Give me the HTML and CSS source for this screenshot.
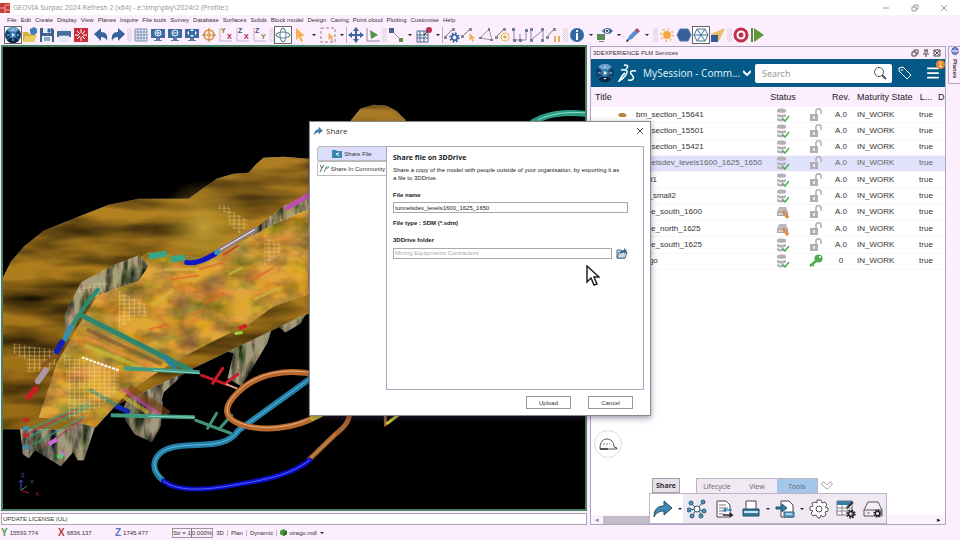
FILE: index.html
```html
<!DOCTYPE html>
<html lang="en">
<head>
    <meta charset="UTF-8">
    <meta name="viewport" content="width=device-width, initial-scale=1.0">
    <title>GEOVIA Surpac 2024 Refresh 2</title>
    <link rel="stylesheet" href="styles.css">
</head>
<body>

    <!-- shared icons -->
    <svg class="sprite" aria-hidden="true">
        <symbol id="i-sphere" viewBox="0 0 16 16"><circle cx="8" cy="8" r="8" fill="#123f6b"/><path d="M8 8 2 2.500a8 8 0 0 1 12 0z" fill="#6fa3cf"/><path d="M8 8 2 13.500a8 8 0 0 0 12 0z" fill="#0a2848"/><path d="M2 3 14 13M14 3 2 13" stroke="#2c6494" stroke-width="1"/><circle cx="8" cy="8" r="3.500" fill="#3878ad"/><path d="M7 6v4l3-2z" fill="#e8f3fb"/><path d="M2 8h2M12 8h2M7 13h2M7 3h2" stroke="#c8deee"/></symbol>
        <symbol id="i-monitor" viewBox="0 0 16 16"><path d="M1 2h14v9H1z" fill="#3b6ba3"/><path d="M6 11h4v2h2v1H4v-1h2z" fill="#5c7fa8"/></symbol>
        <symbol id="i-cursor" viewBox="0 0 16 16"><path d="M4 1v12l3-3 2 5 2-1-2-5h4z" fill="#f0b04f"/></symbol>
        <symbol id="i-gear" viewBox="0 0 16 16"><circle cx="8" cy="8" r="6" fill="none" stroke="currentColor" stroke-width="3" stroke-dasharray="2.400 2.300"/><circle cx="8" cy="8" r="4" fill="none" stroke="currentColor" stroke-width="2.500"/></symbol>
        <symbol id="i-share" viewBox="0 0 20 18"><path d="M1 17C1 9 5 6 11 6V1l8 7-8 7v-4c-5 0-8 2-10 6z" fill="#4288b3" stroke="#234c66"/></symbol>
        <symbol id="i-db" viewBox="0 0 14 14"><path d="M1 2c0-2 9-2 9 0v2c0 1-9 1-9 0zM1 6c2 1 7 1 9 0v2c-1 2-8 2-9 0zM1 10c2 1 5 1 7 1v2c-3 1-7 0-7-1z" fill="#b5afb8"/><path d="M6 10l3 3 4-5" fill="none" stroke="#4cab50" stroke-width="1.500"/></symbol>
        <symbol id="i-drive" viewBox="0 0 14 14"><path d="M3 2h7l2 5H1z" fill="#bdb7c0"/><path d="M1 7h11v4H1z" fill="#aaa4ae"/><path d="M2 9h5" stroke="#fff"/><path d="M8 11V6M6 8l2-2 1 2M11 7v6M9 11l2 2 2-2" fill="none" stroke="#e0883c" stroke-width="1.300"/></symbol>
        <symbol id="i-lock" viewBox="0 0 14 14"><path d="M1 6h8v7H1z" fill="#b3adb6"/><path d="M7 6V3c0-3 5-3 5 0v3" fill="none" stroke="#b3adb6" stroke-width="1.500"/><path d="M5 8v3" stroke="#fff" stroke-width="1.500"/></symbol>
        <symbol id="i-key" viewBox="0 0 14 14"><path d="M7 7 1 12" stroke="#4cab50" stroke-width="2.500"/><path d="M3 10l2 2" stroke="#4cab50" stroke-width="1.500"/><circle cx="9.500" cy="4.500" r="4" fill="#4cab50"/><circle cx="11" cy="3" r="1" fill="#fff"/></symbol>
        <symbol id="i-axes" viewBox="0 0 16 16"><path d="M2 1v13h12" fill="none" stroke="#bdb2cc"/></symbol>
    </svg>

    <header class="titlebar">
        <svg class="app-icon" viewBox="0 0 10 10"><path d="M0 0h10v10H0z" fill="#c83c3a"/><path d="M0 5h5V2h5M5 5v5M5 7h5" stroke="#f0a09a" fill="none"/></svg>
        <h1>GEOVIA Surpac 2024 Refresh 2 (x64) - e:\tmp\pby\2024r2 (Profile:)</h1>
        <div class="window-buttons">
            <button aria-label="Minimise"><svg viewBox="0 0 8 8"><path d="M1 4h6"/></svg></button>
            <button aria-label="Restore"><svg viewBox="0 0 8 8"><path d="M1 3h4v4H1zM3 3V1h4v4H5"/></svg></button>
            <button aria-label="Close window"><svg viewBox="0 0 8 8"><path d="M1 1l6 6M7 1 1 7"/></svg></button>
        </div>
    </header>

    <nav class="menubar">
        <a href="#">File</a><a href="#">Edit</a><a href="#">Create</a><a href="#">Display</a><a href="#">View</a><a href="#">Planes</a><a href="#">Inquire</a><a href="#">File tools</a><a href="#">Survey</a><a href="#">Database</a><a href="#">Surfaces</a><a href="#">Solids</a><a href="#">Block model</a><a href="#">Design</a><a href="#">Caving</a><a href="#">Point cloud</a><a href="#">Plotting</a><a href="#">Customise</a><a href="#">Help</a>
    </nav>

    <div class="toolbar">
        <button class="tool boxed" aria-label="Compass"><svg><use href="#i-sphere"/></svg></button>
        <button class="tool" aria-label="Open"><svg viewBox="0 0 16 16"><path d="M1 5h5l1 2h7l-2 8H1z" fill="#d2b13c"/><path d="M3 9h12l-3 6H1z" fill="#e6cf62"/><path d="M8 2l4-2 3 2v4l-4 2-3-2z" fill="#3f7fc0"/></svg></button>
        <button class="tool" aria-label="Save"><svg viewBox="0 0 16 16"><path d="M1 1h12l2 2v12H1z" fill="#3a6290"/><path d="M4 1h8v5H4zM3 9h10v6H3z" fill="#e9eef5"/><path d="M9 2h2v3H9zM5 11h6M5 13h6" stroke="#3a6290" fill="#3a6290"/></svg></button>
        <button class="tool" aria-label="Print"><svg viewBox="0 0 16 16"><path d="M1 4h14v6H1z" fill="#456f9e"/><path d="M4 1h8v3H4zM3 8h10v7H3z" fill="#e4e8f2"/><path d="M3 8h10" stroke="#29527d"/></svg></button>
        <button class="tool" aria-label="Stop"><svg viewBox="0 0 16 16"><path d="M1 1h14v14H1z" fill="#c8303c"/><path d="M8 2v4M8 10v4M2 8h4M10 8h4M4 4l3 3M12 4 9 7M4 12l3-3M12 12 9 9" stroke="#fff"/></svg></button>
        <button class="tool undo" aria-label="Undo"><svg viewBox="0 0 16 16"><path d="M1 7l7-6v4c5 0 7 3 6 9-1-3-3-4-6-4v4z" fill="#35649b"/></svg></button>
        <button class="tool" aria-label="Redo"><svg viewBox="0 0 16 16"><path d="M15 7 8 1v4C3 5 1 8 2 14c1-3 3-4 6-4v4z" fill="#35649b"/></svg></button>
        <span class="grip"></span>
        <button class="tool" aria-label="Grid"><svg viewBox="0 0 16 16"><path d="M2 2h12v12H2zM5 2v12M8 2v12M11 2v12M2 5h12M2 8h12M2 11h12" fill="#f4f5fc" stroke="#7b8fb9"/></svg></button>
        <button class="tool" aria-label="Zoom in"><svg viewBox="0 0 16 16"><use href="#i-monitor"/><circle cx="8" cy="6" r="3" fill="none" stroke="#fff"/><path d="M6 6h4M8 4v4" stroke="#fff"/></svg></button>
        <button class="tool" aria-label="Zoom out"><svg viewBox="0 0 16 16"><use href="#i-monitor"/><circle cx="8" cy="6" r="3" fill="none" stroke="#fff"/><path d="M6 6h4" stroke="#fff"/></svg></button>
        <button class="tool" aria-label="Zoom all"><svg viewBox="0 0 16 16"><use href="#i-monitor"/><path d="M8 2l2 2H6zM8 10l2-2H6zM3 6l2-2v4zM13 6l-2-2v4z" fill="#fff"/></svg></button>
        <button class="tool" aria-label="Centre"><svg viewBox="0 0 16 16"><circle cx="8" cy="8" r="5" fill="none" stroke="#d88e38" stroke-width="1.500"/><path d="M8 1v5M8 10v5M1 8h5M10 8h5" stroke="#c07a2c"/><circle cx="8" cy="8" r="2" fill="#e6a04c"/></svg></button>
        <button class="tool" aria-label="YX view"><svg viewBox="0 0 16 16"><use href="#i-axes"/><text x="3" y="6" fill="#6d8d36">Y</text><text x="9" y="12" fill="#a02838">X</text></svg></button>
        <button class="tool" aria-label="ZX view"><svg viewBox="0 0 16 16"><use href="#i-axes"/><text x="3" y="6" fill="#35568d">Z</text><text x="9" y="12" fill="#a02838">X</text></svg></button>
        <button class="tool" aria-label="ZY view"><svg viewBox="0 0 16 16"><use href="#i-axes"/><text x="3" y="6" fill="#35568d">Z</text><text x="9" y="12" fill="#6d8d36">Y</text></svg></button>
        <span class="grip"></span>
        <button class="tool boxed" aria-label="Orbit"><svg viewBox="0 0 16 16" fill="none" stroke="#53867a"><ellipse cx="8" cy="8" rx="7" ry="3"/><ellipse cx="8" cy="8" rx="3" ry="7" stroke="#5a7ca8"/><path d="M6 3l2-2 2 2M6 13l2 2 2-2M3 6 1 8l2 2M13 6l2 2-2 2"/></svg></button>
        <button class="tool" aria-label="Select"><svg><use href="#i-cursor"/></svg></button>
        <button class="caret" aria-label="Select options"></button>
        <button class="tool" aria-label="Select area"><svg viewBox="0 0 16 16"><path d="M1 1h14v14H1z" fill="none" stroke="#96788f" stroke-dasharray="3 2"/><use href="#i-cursor" x="6" y="5" width="10" height="10"/></svg></button>
        <button class="caret line" aria-label="Area options"></button>
        <button class="tool" aria-label="Move"><svg viewBox="0 0 16 16"><path d="M8 2v12M2 8h12" stroke="#3a689d" stroke-width="2"/><path d="M8 0l3 4H5zM8 16l3-4H5zM0 8l4-3v6zM16 8l-4-3v6z" fill="#3a689d"/></svg></button>
        <button class="tool" aria-label="Plane"><svg viewBox="0 0 16 16"><path d="M2 1v13h13" fill="none" stroke="#8a86a5"/><path d="M5 3l8 5-7 4z" fill="#4f9542"/></svg></button>
        <span class="grip"></span>
        <button class="tool" aria-label="Segment"><svg viewBox="0 0 16 16"><path d="M4 4l9 9" stroke="#8e8b99"/><path d="M1 1h5v5H1z" fill="#456584"/><path d="M11 11h4v4h-4z" fill="#5d8d3e"/></svg></button>
        <button class="caret" aria-label="Segment options"></button>
        <button class="tool" aria-label="Grid point"><svg viewBox="0 0 16 16"><path d="M1 4h11v11H1zM4 4v11M8 4v11M1 8h11M1 11h11" fill="none" stroke="#48698f"/><circle cx="13" cy="3" r="3" fill="#b93550"/><path d="M12 4 8 8" stroke="#222"/></svg></button>
        <button class="caret line" aria-label="Grid options"></button>
        <button class="tool" aria-label="String settings"><svg viewBox="0 0 16 16"><path d="M1 10 9 2" stroke="#76866f"/><path d="M0 9h3v3H0zM8 1h3v3H8z" fill="#8c86a0"/><use href="#i-gear" x="5" y="5" width="11" height="11" color="#34679b"/></svg></button>
        <button class="tool" aria-label="String select"><svg viewBox="0 0 16 16"><path d="M2 9 9 2" stroke="#76866f"/><path d="M0 8h3v3H0zM8 1h3v3H8z" fill="#8c86a0"/><use href="#i-cursor" x="6" y="5" width="10" height="11"/></svg></button>
        <button class="tool" aria-label="Polygon"><svg viewBox="0 0 16 16"><path d="M2 11 11 2l3 11z" fill="none" stroke="#9a98a6"/><path d="M1 10h3v2H1zM10 1h2v3h-2zM12 12h3v2h-3z" fill="#77809a"/></svg></button>
        <button class="tool" aria-label="Add point"><svg viewBox="0 0 16 16"><path d="M1 10 9 2" stroke="#76866f"/><path d="M0 9h3v3H0zM8 1h3v3H8z" fill="#8c86a0"/><circle cx="10" cy="10" r="4" fill="#fff4dd" stroke="#e8b75d"/><path d="M8 10h4M10 8v4" stroke="#dc9d35"/></svg></button>
        <button class="tool" aria-label="Join"><svg viewBox="0 0 16 16"><path d="M2 2v11h6V7M8 13h6V3" fill="none" stroke="#8a86a5"/><path d="M0 1h3v3H0zM1 12h3v3H1zM7 12h3v3H7zM13 2h3v3h-3z" fill="#6f7895"/></svg></button>
        <button class="tool" aria-label="Break"><svg viewBox="0 0 16 16"><path d="M2 14V3M2 13 14 3v11" fill="none" stroke="#8a86a5"/><path d="M1 1h3v3H1zM1 12h3v3H1zM12 1h3v3h-3zM12 12h3v3h-3z" fill="#77809a"/></svg></button>
        <button class="tool" aria-label="Renumber"><svg viewBox="0 0 16 16"><path d="M1 10 8 2" stroke="#76866f"/><path d="M0 9h3v3H0zM7 1h3v3H7z" fill="#8c86a0"/><path d="M9 9v6M13 9v6M8 10h1M12 10h1" stroke="#e9ae57" stroke-width="2"/></svg></button>
        <span class="grip"></span>
        <button class="tool" aria-label="Info"><svg viewBox="0 0 16 16"><circle cx="8" cy="8" r="7" fill="#3268a4"/><path d="M8 3v2M8 6v7" stroke="#fff" stroke-width="2"/></svg></button>
        <button class="caret" aria-label="Info options"></button>
        <button class="tool" aria-label="Show"><svg viewBox="0 0 16 16"><path d="M0 7h8v6H0zM2 14h5v1H2z" fill="#5c8c52"/><path d="M5 4c3-4 8-4 11 0-3 4-8 4-11 0z" fill="#3f6f99"/><circle cx="10" cy="4" r="2" fill="#fff"/><circle cx="10" cy="4" r="1" fill="#222"/></svg></button>
        <button class="caret" aria-label="Show options"></button>
        <button class="tool" aria-label="Edit"><svg viewBox="0 0 16 16"><path d="M2 14 4 9l7-7 3 3-7 7z" fill="#5c8fd0"/><path d="M10 3l2-2 3 3-2 2z" fill="#b84d62"/><path d="M1 15l1-3 2 2z" fill="#222"/></svg></button>
        <button class="caret" aria-label="Edit options"></button>
        <span class="grip"></span>
        <button class="tool" aria-label="Light"><svg viewBox="0 0 16 16"><circle cx="8" cy="8" r="4" fill="#f2a93a"/><circle cx="8" cy="8" r="6" fill="none" stroke="#f0b45a" stroke-width="2" stroke-dasharray="1.500 3.200"/></svg></button>
        <button class="tool" aria-label="Solid"><svg viewBox="0 0 16 16"><path d="M4 2h8l3 6-3 6H4L1 8z" fill="#345f98" stroke="#4e79ad"/></svg></button>
        <button class="tool boxed" aria-label="Wireframe"><svg viewBox="0 0 16 16"><path d="M4 2h8l3 6-3 6H4L1 8zM4 2l8 12M12 2 4 14M1 8h14" fill="#f4f8ff" stroke="#4b7095"/></svg></button>
        <button class="tool" aria-label="Spotlight"><svg viewBox="0 0 16 16"><path d="M1 7 15 1 9 14z" fill="#edbb62"/><path d="M1 8h7v7H1z" fill="#2f5c93"/></svg></button>
        <span class="grip"></span>
        <button class="tool" aria-label="Record"><svg viewBox="0 0 16 16"><circle cx="8" cy="8" r="6" fill="#fff" stroke="#c02f4e" stroke-width="3"/><circle cx="8" cy="8" r="2.500" fill="#c02f4e"/></svg></button>
        <button class="tool" aria-label="Play"><svg viewBox="0 0 16 16"><path d="M2 1v14" stroke="#568f47" stroke-width="2"/><path d="M4 1l10 7-10 7z" fill="#5e983d"/></svg></button>
    </div>

    <main class="workspace">
        <section class="viewport">
            <svg class="scene" viewBox="4 47 583 463" preserveAspectRatio="xMidYMid slice">
                <defs>
                    <!-- one noise channel spread over r, g and b gives grey shading -->
                    <filter id="folds" x="0" y="0" width="1" height="1" color-interpolation-filters="sRGB">
                        <feTurbulence type="fractalNoise" baseFrequency=".01 .045" numOctaves="3" seed="7"/>
                        <feColorMatrix values="1.600 0 0 0 0  1.600 0 0 0 0  1.600 0 0 0 0  0 0 0 0 1" result="n"/>
                        <feBlend in="SourceGraphic" in2="n" mode="multiply"/>
                        <feComposite in2="SourceGraphic" operator="in"/>
                    </filter>
                    <filter id="rough" x="0" y="0" width="1" height="1" color-interpolation-filters="sRGB">
                        <feTurbulence type="fractalNoise" baseFrequency=".035 .06" numOctaves="4" seed="3"/>
                        <feColorMatrix values=".9 0 0 0 .4  .7 .4 0 0 .3  .4 0 1 0 .1  0 0 0 0 1" result="n"/>
                        <feBlend in="SourceGraphic" in2="n" mode="multiply"/>
                        <feComposite in2="SourceGraphic" operator="in"/>
                    </filter>
                    <filter id="rock" x="0" y="0" width="1" height="1" color-interpolation-filters="sRGB">
                        <feTurbulence type="fractalNoise" baseFrequency=".12 .03" numOctaves="4" seed="11"/>
                        <feColorMatrix values="2.200 0 0 0 -.35  1.900 .3 0 0 -.35  1.800 0 .3 0 -.35  0 0 0 0 1" result="n"/>
                        <feBlend in="SourceGraphic" in2="n" mode="multiply"/>
                        <feComposite in2="SourceGraphic" operator="in"/>
                    </filter>
                    <radialGradient id="glow" cx="205" cy="228" r="48" gradientUnits="userSpaceOnUse"><stop offset="0" stop-color="#bf9c34"/><stop offset="1" stop-color="#b88a20" stop-opacity="0"/></radialGradient>
                    <linearGradient id="hill" x1="0" y1="0" x2="0" y2="1"><stop offset="0" stop-color="#a87a26"/><stop offset=".4" stop-color="#b4821e"/><stop offset="1" stop-color="#966814"/></linearGradient>
                    <pattern id="mesh" width="5" height="4" patternUnits="userSpaceOnUse"><path d="M0 0h5M0 0v4" stroke="#f0dfa0" stroke-width=".8" fill="none"/></pattern>
                </defs>
                <!-- rock below the surface -->
                <g filter="url(#rock)" fill="#a29a80">
                    <path d="M310 285v25l-8 14-15 9-12-10-6 20-26 44-14-8 6-25-25-7-10 14-35 32-10 40-20-6-10-18 10-28 60-50 50-20z"/>
                    <path d="M126 420l10 15 17 8 9-16 2-25-30-10zM20 420l4 35 6 4 6-8 26 16 12-14 5 8h6l14-42 6-40-60-10z"/>
                </g>
                <!-- back hill -->
                <path filter="url(#folds)" fill="url(#hill)" d="M4 278l8-16 13-15 20-16 30-12 35-14 30-6h50l15-11 13-9 17-5 15-1 8-9 7-6 20-1 25 2 30-18 13-21 9-11 13-4 13 1 10 5 9 9v180l-100 15-240 115H4z"/>
                <circle cx="205" cy="228" r="48" fill="url(#glow)"/>
                <!-- front surface -->
                <path filter="url(#rough)" fill="#e0a63c" d="M310 205v90l-10 3-25 9-25 18-12 5-43 22-27 15-38 25-33 36-25-6-14-2-18-2 18-54 20-35 25-40 22-22 25-14 60 6 40-20 35-24z"/>
                <path filter="url(#rock)" fill="#a8a07c" d="M66 315l16-32 34-18 24-9 10 10-10 15-17 6-32 12-15 28-10 12z"/>
                <path filter="url(#rock)" fill="#b0a080" d="M258 228l28-22 24-10v14l-38 16-20 12z"/>
                <!-- coloured veins -->
                <g fill="none" stroke-width="4" opacity=".65">
                    <path d="M88 330l75 35" stroke="#7a5a38"/><path d="M86 338l68 29" stroke="#e8903a"/><path d="M86 346l58 23" stroke="#c8bc38"/><path d="M86 322l90 42" stroke="#9a8a40" stroke-width="7"/>
                    <path d="M125 390l36 25" stroke="#c03ea0"/><path d="M130 388l40 27" stroke="#7c4218" stroke-width="7"/><path d="M110 388l40 26" stroke="#cfae30"/><path d="M90 390l42 24" stroke="#3a8a70"/>
                    <path d="M172 280l28-4M200 270l24-7M205 305l20-12M150 330l20-5M255 280l20-12M195 315l12-5" stroke="#e0602c" stroke-width="2"/>
                    <path d="M165 270l35 0M255 300l28-12M175 290l-20 15M230 275l14-7" stroke="#d0b848" stroke-width="3"/>
                    <path d="M30 430l60-26M30 438l62-32M35 445l50-28" stroke="#399a7c" stroke-width="2"/><path d="M28 435l50-25M44 448l40-28" stroke="#b03860" stroke-width="2"/>
                </g>
                <path d="M117 407l14 6" stroke="#1528b0" stroke-width="5"/>
                <path d="M50 445l8-5M60 458l6-4" stroke="#c86ad8" stroke-width="4"/><path d="M58 457h6" stroke="#50d060" stroke-width="4"/>
                <path d="M24 421h6M24 436h6" stroke="#c02828" stroke-width="4"/><path d="M24 429h6M24 448h6" stroke="#3a8fb0" stroke-width="4"/>
                <path d="M240 329l8-3" stroke="#d02020" stroke-width="4"/><path d="M236 334l8-1" stroke="#a0d040" stroke-width="3"/>
                <!-- block model cells -->
                <g fill="url(#mesh)">
                    <path d="M220 205h9l4 7 16 8v8l-8 6-10-8-2-12-9-4z"/><path d="M266 236l18 10-4 10-14 10z"/><path d="M120 292l28 13v13l-10-2-18 14z"/><path d="M14 344l46 7-6 20-26 2-2-13-12-6z"/><path d="M65 355l55 16v20l-20 18-30 11z"/><path d="M79 290l18-7h12v4l-20 2-8 5z"/>
                </g>
                <path d="M83 358l37 13" stroke="#fff" stroke-width="2" stroke-dasharray="3 1"/>
                <!-- ramps and drives -->
                <g fill="none" stroke-linecap="round">
                    <path d="M99 290 88 304 72 328" stroke="#2c8c76" stroke-width="4"/><path d="M72 328l-6 12" stroke="#2a92b8" stroke-width="5"/><path d="M63 343l-5 9" stroke="#1420b8" stroke-width="6"/><path d="M56 357l-12 9" stroke="#8a561c" stroke-width="4"/><path d="M47 371l-8 11" stroke="#ad98a2" stroke-width="6"/><path d="M37 389l-8 9" stroke="#cc1c22" stroke-width="5"/>
                    <path d="M83 316l109 55" stroke="#2d876f" stroke-width="5"/><path d="M165 357l12 13" stroke="#2382a0" stroke-width="4"/>
                    <path d="M125 369l76 4M112 416l84 2" stroke="#3f9c82" stroke-width="4" stroke-linecap="butt"/><path d="M155 371l46 3M150 417l46 1" stroke="#8ed8c6" stroke-width="1"/>
                    <path d="M150 257l18-3M172 260l14-2" stroke="#38a585" stroke-width="6" stroke-linecap="butt"/>
                    <path d="M188 263c12 1 20-4 29-9" stroke="#0d18c0" stroke-width="5"/><path d="M218 253l3-2" stroke="#2a98b8" stroke-width="5"/><path d="M222 250l34-20" stroke="#8e7c82" stroke-width="5"/><path d="M222 250l34-20" stroke="#fff"/><path d="M225 255l14-9" stroke="#c8452c" stroke-width="2"/>
                    <path d="M289 208l22-13" stroke="#c050b0" stroke-width="5"/>
                    <path d="M203 376l25 9M214 384l10-15M227 384l12-9" stroke="#c81c28" stroke-width="3"/><path d="M228 385l10 4" stroke="#e8a090" stroke-width="2"/>
                    <path d="M197 421l35 13M209 429l9-15M222 428l11-12" stroke="#3f9478" stroke-width="3"/>
                    <path d="M163 480c-14-12-8-30 17-33s48 2 60-16l72-52" stroke="#247fa6" stroke-width="6"/><path d="M162 478c-12-12-6-28 18-31s48 2 60-16l72-52" stroke="#60bede" stroke-width="1"/>
                    <path d="M320 376c-34-8-60 0-75 12-24 20-20 32 0 38 20 6 50 4 75-10" stroke="#b6682e" stroke-width="6"/><path d="M320 375c-34-8-60 0-75 12-24 20-20 32 0 38 20 6 50 4 75-10" stroke="#eeb080" stroke-width="1"/>
                    <path d="M314 419l14-6" stroke="#ccc828" stroke-width="5"/>
                    <path d="M351 414c0 10-8 16-14 21l-26 25" stroke="#a8642e" stroke-width="5"/><path d="M337 435l-26 25" stroke="#e0a060"/>
                    <path d="M165 482c15 12 48 8 70 4s55-8 76-25" stroke="#0b10c8" stroke-width="5"/><path d="M165 482c15 12 48 8 70 4s55-8 76-25" stroke="#5862f0"/>
                    <path d="M387 414v12" stroke="#9b623a" stroke-width="3"/><path d="M389 424l12-9" stroke="#c8c83c" stroke-width="3"/>
                    <path d="M535 122c15-8 30-10 53-8" stroke="#2d9c82" stroke-width="6"/><path d="M540 120c15-7 30-8 48-7" stroke="#8ae0cc"/>
                </g>
                <!-- axis triad -->
                <g class="triad" fill="none">
                    <path d="M22 491v-10l-2 2M22 481l2 2" stroke="#5050d8"/><path d="M22 491l6-4" stroke="#3a9850"/><path d="M22 491l8 3" stroke="#c02030"/>
                    <text x="22" y="478" fill="#4a4ab8">Z</text><text x="31" y="485" fill="#4a9860">Y</text><text x="36" y="497" fill="#a02838">X</text>
                </g>
            </svg>
        </section>

        <section class="plm">
            <div class="plm-title">
                <h2>3DEXPERIENCE PLM Services</h2>
                <button aria-label="Float"><svg viewBox="0 0 8 8"><path d="M1 3h4v4H1zM3 3V1h4v4H5"/></svg></button>
                <button aria-label="Pin"><svg viewBox="0 0 8 8"><path d="M2 1h4M3 1v3M5 1v3M1 5h6M4 5v3"/></svg></button>
                <button aria-label="Close panel"><svg viewBox="0 0 8 8"><path d="M1 1h6v6H1zM2 2l4 4M6 2 2 6"/></svg></button>
            </div>
            <div class="session">
                <svg class="compass"><use href="#i-sphere"/></svg>
                <svg class="ds-logo" viewBox="0 0 20 18" fill="none" stroke="#fff" stroke-width="1.500"><path d="M6 1c4 0 5 1 2 4M3 6c6-1 8 1 4 6-2 3-4 4-6 5 3-5 4-7 6-8M18 7c-5-1-7 1-4 4s1 6-4 5"/></svg>
                <button class="session-name">MySession - Comm...</button>
                <svg class="chevron" viewBox="0 0 8 6"><path d="M0 1l4 4 4-4" fill="none" stroke="#fff" stroke-width="2"/></svg>
                <label class="search">
                    <input type="search" placeholder="Search" aria-label="Search">
                    <svg viewBox="0 0 14 14" fill="none" stroke="#555"><circle cx="6" cy="6" r="4.500"/><path d="M9 9l4 4" stroke-width="2"/></svg>
                </label>
                <button class="tag" aria-label="Tags"><svg viewBox="0 0 14 14" fill="none" stroke="#fff"><path d="M1 2l4-1 8 8-4 4-8-8z"/><circle cx="4" cy="4" r=".5"/></svg></button>
                <button class="burger" aria-label="Menu"><svg viewBox="0 0 12 12"><path d="M1 2h10M1 6h10M1 10h10" stroke="#fff" stroke-width="1.500"/></svg><span class="badge">1</span></button>
            </div>
            <table class="objects">
                <colgroup><col><col class="c-status"><col class="c-lock"><col class="c-rev"><col class="c-state"><col class="c-latest"><col class="c-last"></colgroup>
                <thead>
                    <tr><th>Title</th><th class="mid">Status</th><th></th><th class="mid">Rev.</th><th class="state">Maturity State</th><th class="mid">L...</th><th class="state">D</th></tr>
                </thead>
                <tbody>
                    <tr><td class="name"><svg class="ore" viewBox="0 0 9 6"><path d="M0 3l2-2h4l3 2-2 2H2z" fill="#b98638"/></svg>bm_section_15641</td><td class="mid"><svg><use href="#i-db"/></svg></td><td class="mid"><svg><use href="#i-lock"/></svg></td><td class="mid">A.0</td><td class="state">IN_WORK</td><td class="mid">true</td><td></td></tr>
                    <tr><td class="name">bm_section_15501</td><td class="mid"><svg><use href="#i-db"/></svg></td><td class="mid"><svg><use href="#i-lock"/></svg></td><td class="mid">A.0</td><td class="state">IN_WORK</td><td class="mid">true</td><td></td></tr>
                    <tr><td class="name">bm_section_15421</td><td class="mid"><svg><use href="#i-db"/></svg></td><td class="mid"><svg><use href="#i-lock"/></svg></td><td class="mid">A.0</td><td class="state">IN_WORK</td><td class="mid">true</td><td></td></tr>
                    <tr class="selected"><td class="name">tunnelsdev_levels1600_1625_1650</td><td class="mid"><svg><use href="#i-db"/></svg></td><td class="mid"><svg><use href="#i-lock"/></svg></td><td class="mid">A.0</td><td class="state">IN_WORK</td><td class="mid">true</td><td></td></tr>
                    <tr><td class="name">solid1</td><td class="mid"><svg><use href="#i-db"/></svg></td><td class="mid"><svg><use href="#i-lock"/></svg></td><td class="mid">A.0</td><td class="state">IN_WORK</td><td class="mid">true</td><td></td></tr>
                    <tr><td class="name">pits_small2</td><td class="mid"><svg><use href="#i-db"/></svg></td><td class="mid"><svg><use href="#i-lock"/></svg></td><td class="mid">A.0</td><td class="state">IN_WORK</td><td class="mid">true</td><td></td></tr>
                    <tr><td class="name">stope_south_1600</td><td class="mid"><svg><use href="#i-drive"/></svg></td><td class="mid"><svg><use href="#i-lock"/></svg></td><td class="mid">A.0</td><td class="state">IN_WORK</td><td class="mid">true</td><td></td></tr>
                    <tr><td class="name">stope_north_1625</td><td class="mid"><svg><use href="#i-drive"/></svg></td><td class="mid"><svg><use href="#i-lock"/></svg></td><td class="mid">A.0</td><td class="state">IN_WORK</td><td class="mid">true</td><td></td></tr>
                    <tr><td class="name">stope_south_1625</td><td class="mid"><svg><use href="#i-db"/></svg></td><td class="mid"><svg><use href="#i-lock"/></svg></td><td class="mid">A.0</td><td class="state">IN_WORK</td><td class="mid">true</td><td></td></tr>
                    <tr><td class="name">virago</td><td class="mid"><svg><use href="#i-db"/></svg></td><td class="mid"><svg><use href="#i-key"/></svg></td><td class="mid">0</td><td class="state">IN_WORK</td><td class="mid">true</td><td></td></tr>
                </tbody>
            </table>
            <button class="helmet" aria-label="Role"><svg viewBox="0 0 20 14" fill="none" stroke="#555"><path d="M2 11C2 5 5 2 9 2s7 3 7 8l3 1v1H2z"/><path d="M5 7h7" stroke-dasharray="2 1" stroke="#888"/><path d="M2 12h8" stroke-width="2"/></svg></button>
            <div class="scrollbar"><button aria-label="Scroll left">◂</button><span class="thumb"></span><button class="right" aria-label="Scroll right">▸</button></div>

            <div class="actionbar">
                <div class="action-tabs">
                    <span class="tip">Share</span>
                    <div class="tabs"><button>Lifecycle</button><button>View</button><button class="active">Tools</button></div>
                    <svg class="heart" viewBox="0 0 12 9"><path d="M1 2l2-1 3 3 3-3 2 1v2L6 8 1 4z" fill="#fff" stroke="#aaa"/></svg>
                </div>
                <div class="actions">
                    <button class="share" aria-label="Share model"><svg viewBox="0 0 20 18"><use href="#i-share"/></svg></button>
                    <button class="drop" aria-label="Share options"></button>
                    <button aria-label="Network"><svg viewBox="0 0 20 20"><path d="M10 10 4 4M10 10l6-7M10 10l-8 1M10 10l8 3M10 10l-5 7M10 10l5 6" stroke="#35566e"/><g fill="#4d98c2" stroke="#285878"><circle cx="4" cy="4" r="2"/><circle cx="16" cy="3" r="2"/><circle cx="2" cy="11" r="2"/><circle cx="17" cy="12" r="2"/><circle cx="5" cy="17" r="2"/><circle cx="14" cy="17" r="2"/><circle cx="10" cy="10" r="3" fill="#fff"/></g></svg></button>
                    <button aria-label="Compare"><svg viewBox="0 0 20 20" fill="none" stroke="#444"><path d="M3 2h9l4 4v12H3z" fill="#fff"/><path d="M5 6h7M5 9h9M5 12h5M5 15h5" stroke="#777"/><path d="M18 11h-8l2-2M10 11l2 2" stroke="#2e86b8" stroke-width="1.500"/><path d="M9 16h9l-2-2M18 16l-2 2" stroke="#222" stroke-width="1.500"/></svg></button>
                    <button aria-label="Print"><svg viewBox="0 0 20 20"><path d="M5 2h10v9H5z" fill="#fff" stroke="#444"/><path d="M2 10h16v7H2z" fill="#367a9f" stroke="#234c60"/><path d="M3 13h14" stroke="#c8e4f0" stroke-width="2"/></svg></button>
                    <button class="drop" aria-label="Print options"></button>
                    <button aria-label="Export"><svg viewBox="0 0 20 20"><path d="M6 2h8l4 4v12H6z" fill="#fff" stroke="#444"/><path d="M1 8h6V5l5 4-5 4v-3H1z" fill="#3680aa" stroke="#23536c"/><path d="M9 13h10v5H9z" fill="#5fa3ca" stroke="#2c607f"/><path d="M11 15h6" stroke="#fff"/></svg></button>
                    <button class="drop" aria-label="Export options"></button>
                    <button aria-label="Settings"><svg viewBox="0 0 20 20" fill="#fff" stroke="#555"><path d="M8 1h4l1 3 3-1 2 3-2 2 3 1v3l-3 1 1 3-3 2-2-2-1 3H9l-2-3-3 1-2-3 2-2-3-1V8l3-1-1-3 3-1 2 1z"/><circle cx="10" cy="10" r="3"/></svg></button>
                    <button aria-label="Table settings"><svg viewBox="0 0 20 20"><path d="M1 2h15v14H1z" fill="#fff" stroke="#777"/><path d="M1 2h15v4H1z" fill="#387da8"/><path d="M1 9h15M1 12h15M6 6v10M11 6v10" stroke="#888"/><path d="M11 9l6-6" stroke="#333" stroke-width="2"/><use href="#i-gear" x="10" y="10" width="10" height="10" color="#222"/></svg></button>
                    <button aria-label="Drive settings"><svg viewBox="0 0 20 20"><path d="M5 3h10l4 8v6H1v-6zM1 11h18" fill="#f3eef6" stroke="#555"/><path d="M4 14h3" stroke="#777"/><use href="#i-gear" x="10" y="10" width="9" height="9" color="#222"/></svg></button>
                </div>
            </div>
        </section>

        <aside class="dock">
            <button class="dock-tab"><svg viewBox="0 0 8 8"><path d="M4 0l3 2v4L4 8 1 6V2z" fill="#7a8ed0" stroke="#4c5ba8"/><path d="M1 4h6" stroke="#fff"/></svg><span>Planes</span></button>
        </aside>
    </main>

    <input class="command" aria-label="Command" value="UPDATE LICENSE (UL)">

    <footer class="status">
        <span class="coord"><b class="y">Y</b>15593.774</span>
        <span class="coord"><b class="x">X</b>6836.137</span>
        <span class="coord"><b class="z">Z</b>1745.477</span>
        <span class="str"><span>Str = 1</span><span>0.000%</span></span>
        <span class="mode">3D</span><span class="mode">Plan</span><span class="mode">Dynamic</span>
        <span class="model"><svg viewBox="0 0 8 8"><path d="M4 0l4 2v4L4 8 0 6V2z" fill="#4c9a3a"/><path d="M4 4v4l4-2V2z" fill="#2f6a26"/></svg>virago.mdl</span>
        <button class="caret" aria-label="Model options"></button>
    </footer>

    <div class="dialog" role="dialog" aria-labelledby="dialog-title">
        <div class="dialog-head">
            <svg viewBox="0 0 20 18"><use href="#i-share"/></svg>
            <h2 id="dialog-title">Share</h2>
            <button aria-label="Close dialog"><svg viewBox="0 0 8 8"><path d="M1 1l6 6M7 1 1 7"/></svg></button>
        </div>
        <div class="dialog-body">
            <div class="side-tabs">
                <button class="active"><svg viewBox="0 0 10 9"><path d="M0 1h4l1 1h5v7H0z" fill="#3787ae"/><path d="M7 4 4 5l3 2" stroke="#fff" fill="none"/></svg>Share File</button>
                <button><svg viewBox="0 0 10 9" fill="none"><path d="M1 1l2 3 2-3M3 4 1 8" stroke="#555"/><path d="M5 8l3-6M7 4h2l1-2" stroke="#3787ae"/></svg>Share In Community</button>
            </div>
            <form class="pane">
                <h3>Share file on 3DDrive</h3>
                <p>Share a copy of the model with people outside of your organisation, by exporting it as<br>a file to 3DDrive.</p>
                <label for="file-name">File name</label>
                <input id="file-name" value="tunnelsdev_levels1600_1625_1650">
                <strong>File type : SDM (*.sdm)</strong>
                <label for="folder">3DDrive folder</label>
                <div class="folder-row">
                    <input id="folder" value="Mining Equipments Contractors" disabled>
                    <button type="button" aria-label="Browse"><svg viewBox="0 0 12 12"><path d="M1 3h4l1 1h3v7H1z" fill="#e8eef5" stroke="#53667c"/><path d="M3 5h8l-2 6H1z" fill="#cdd9e6" stroke="#53667c"/><path d="M4 7c0-3 2-4 4-4V1l3 3-3 3V5" fill="#3b6b96"/></svg></button>
                </div>
            </form>
        </div>
        <div class="dialog-foot"><button>Upload</button><button>Cancel</button></div>
    </div>

    <svg class="pointer" viewBox="0 0 14 21"><path d="M1 1v16l4-4 3 7 3-1-3-7h5z" fill="#fff" stroke="#222" stroke-width="1.500"/></svg>

</body>
</html>
```
FILE: styles.css
```css
* {
    box-sizing: border-box;
}

body {
    margin: 0;
    height: 100vh;
    display: flex;
    flex-direction: column;
    overflow: hidden;
    background: #fdeefd;
    color: #333;
    font-family: "Liberation Sans", Arial, sans-serif;
    font-size: 6px;
}

button,
input {
    margin: 0;
    padding: 0;
    border: 0;
    background: none;
    color: inherit;
    font: inherit;
}

h1,
h2,
h3,
p {
    margin: 0;
    font-weight: normal;
}

svg {
    display: block;
}

.sprite {
    position: absolute;
    width: 0;
    height: 0;
}

/* title bar and menus */
.titlebar {
    display: flex;
    align-items: center;
    gap: 3px;
    height: 15px;
    background: #fff;
}

.titlebar h1 {
    flex: 1;
    color: #999;
    font-family: "Noto Sans", sans-serif;
    font-size: 7px;
}

.app-icon {
    width: 10px;
    height: 10px;
}

.window-buttons {
    display: flex;
    gap: 21px;
    padding-right: 12px;
}

.window-buttons svg {
    width: 8px;
    height: 8px;
    fill: none;
    stroke: #999;
}

.menubar {
    display: flex;
    gap: 4px;
    height: 10px;
    padding-left: 7px;
    line-height: 10px;
}

.menubar a {
    color: #333;
    text-decoration: none;
    white-space: nowrap;
}

.toolbar {
    display: flex;
    align-items: center;
    gap: 1px;
    height: 20px;
    padding-left: 5px;
}

.tool {
    width: 16px;
    height: 16px;
    flex: none;
}

.tool svg {
    width: 16px;
    height: 16px;
}

.tool text {
    font-size: 7px;
    font-weight: bold;
}

.tool.boxed {
    outline: 1px solid #666;
    background: #fff;
}

.tool.undo {
    margin-left: 3px;
}

.grip {
    width: 5px;
    height: 14px;
    flex: none;
    background: repeating-conic-gradient(#dccfe0 0 25%, transparent 0 50%) 0 0 / 2px 2px;
}

.caret {
    width: 10px;
    height: 16px;
    flex: none;
    display: flex;
    align-items: center;
    justify-content: center;
}

.caret::before,
.drop::before {
    content: "";
    border: 2px solid transparent;
    border-top-color: #222;
    border-bottom: 0;
}

.caret.line {
    border-right: 1px solid #bbaec2;
}

/* workspace */
.workspace {
    flex: 1;
    min-height: 0;
    display: grid;
    grid-template-columns: minmax(0, 587fr) minmax(0, 357fr) 12px;
    gap: 2px;
}

.viewport {
    margin-left: 1px;
    margin-bottom: 2px;
    border: 2px solid #468260;
    background: #000;
    overflow: hidden;
}

.scene {
    width: 100%;
    height: 100%;
}

.triad text {
    font-size: 6px;
}

.plm {
    position: relative;
    display: flex;
    flex-direction: column;
    min-height: 0;
    margin-top: 1px;
    margin-left: 1px;
    margin-bottom: -12px;
    border: 1px solid #aaa7c4;
    background: #fff;
    overflow: hidden;
}

.plm-title {
    display: flex;
    align-items: center;
    gap: 3px;
    height: 12px;
    padding: 0 4px 0 2px;
    background: #fdeefd;
}

.plm-title h2 {
    flex: 1;
    font-size: 6px;
}

.plm-title svg {
    width: 8px;
    height: 8px;
    fill: none;
    stroke: #444;
}

.session {
    display: flex;
    align-items: center;
    height: 28px;
    padding: 0 5px;
    background: #055987;
    color: #fff;
}

.compass {
    width: 18px;
    height: 18px;
    margin-right: 4px;
}

.ds-logo {
    width: 20px;
    height: 18px;
}

.session-name {
    margin-left: 5px;
    flex: 1;
    text-align: left;
    color: #dcebf4;
    font-family: "Noto Sans", sans-serif;
    font-size: 10px;
    white-space: nowrap;
}

.chevron {
    width: 8px;
    height: 6px;
    margin-right: 4px;
}

.search {
    display: flex;
    align-items: center;
    width: 137px;
    height: 19px;
    padding: 0 5px 0 7px;
    border-radius: 2px;
    background: #fff;
}

.search input {
    flex: 1;
    min-width: 0;
    outline: 0;
    font-family: "Noto Sans", sans-serif;
    font-size: 9px;
}

.search input::placeholder {
    color: #999;
}

.search svg,
.tag svg {
    width: 14px;
    height: 14px;
}

.tag {
    margin: 0 14px 0 6px;
}

.burger {
    position: relative;
}

.burger svg {
    width: 14px;
    height: 14px;
}

.badge {
    position: absolute;
    top: -6px;
    right: -5px;
    width: 9px;
    height: 9px;
    border-radius: 50%;
    background: #e88b34;
    font-size: 7px;
    line-height: 9px;
}

.objects {
    width: 100%;
    height: 183px;
    table-layout: fixed;
    border-collapse: collapse;
    font-size: 8px;
    line-height: 10px;
    white-space: nowrap;
}

.c-status { width: 46px; }
.c-lock { width: 20px; }
.c-rev { width: 30px; }
.c-state { width: 59px; }
.c-latest { width: 22px; }
.c-last { width: 8px; }

.objects th,
.objects td {
    padding: 0;
    text-align: left;
}

.objects th {
    height: 20px;
    padding-left: 4px;
    background: #fdeefd;
    font-size: 9px;
    font-weight: normal;
    color: #222;
}

.objects td {
    padding-left: 4px;
    border-bottom: 1px solid #f8f4f8;
}

.objects .mid {
    padding-left: 0;
    text-align: center;
}

.objects .state {
    padding-left: 1px;
}

.objects .name {
    padding-left: 45px;
}

.objects td svg {
    width: 14px;
    height: 14px;
    margin: 0 auto;
}

.objects .ore {
    float: left;
    width: 9px;
    height: 6px;
    margin: 2px 0 0 -18px;
}

.selected {
    background: #e0e1fb;
    color: #666;
}

.helmet {
    display: grid;
    place-items: center;
    width: 28px;
    height: 28px;
    margin: auto 0 57px 3px;
    border: 1px solid #ddd;
    border-radius: 50%;
}

.helmet svg {
    width: 20px;
    height: 14px;
}

.scrollbar {
    display: flex;
    align-items: center;
    height: 9px;
    background: #fbf3fb;
}

.scrollbar button {
    width: 12px;
    color: #888;
    font-size: 7px;
    line-height: 8px;
}

.scrollbar .right {
    margin-left: auto;
    color: #222;
}

.thumb {
    width: 70px;
    height: 8px;
    background: #c3bcc8;
}

/* floating action bar over the scroll bar */
.actionbar {
    position: absolute;
    bottom: 0;
    left: 50%;
    transform: translateX(-50%);
}

.action-tabs {
    display: flex;
    align-items: flex-end;
    padding-left: 3px;
}

.tip {
    padding: 0 3px;
    margin-right: 16px;
    border: 1px solid #a79fae;
    background: #e7dfea;
    font-family: "Open Sans", sans-serif;
    font-size: 7px;
    font-weight: bold;
    line-height: 13px;
}

.tabs {
    display: flex;
    border: 1px solid #bcb4c2;
    border-bottom: 0;
    background: #f0e8f3;
}

.tabs button {
    width: 40px;
    height: 14px;
    color: #666;
    font-family: "Open Sans", sans-serif;
    font-size: 7px;
}

.tabs .active {
    background: #a3c7eb;
}

.heart {
    width: 12px;
    height: 9px;
    margin: 0 0 3px 3px;
}

.actions {
    display: flex;
    align-items: center;
    gap: 1px;
    height: 31px;
    border: 1px solid #bcb4c2;
    background: #f0e8f3;
}

.actions button {
    width: 26px;
    height: 29px;
    display: grid;
    place-items: center;
}

.actions svg {
    width: 20px;
    height: 20px;
}

.actions .share,
.actions .share + .drop {
    background: #fff;
}

.actions .drop {
    width: 7px;
    margin-left: -1px;
}

.dock {
    padding-top: 1px;
}

.dock-tab {
    display: flex;
    flex-direction: column;
    align-items: center;
    gap: 4px;
    width: 12px;
    height: 38px;
    border: 1px solid #aaa7c4;
    border-right: 0;
}

.dock-tab svg {
    width: 8px;
    height: 8px;
}

.dock-tab span {
    writing-mode: vertical-rl;
    font-size: 6px;
    font-weight: bold;
    line-height: 8px;
}

/* command line and status bar */
.command {
    width: 61%;
    height: 12px;
    margin-left: 1px;
    padding-left: 1px;
    border: 1px solid #aaa2b0;
    background: #fff;
    font-size: 6px;
}

.status {
    display: flex;
    align-items: center;
    height: 15px;
    padding-left: 1px;
}

.coord {
    display: flex;
    align-items: center;
    gap: 2px;
    width: 57px;
}

.coord b {
    font-size: 10px;
    line-height: 10px;
}

.y { color: #4f9a48; }
.x { color: #bd3c3c; }
.z { color: #5878bd; }

.str {
    display: flex;
    border: 1px solid #999;
    line-height: 8px;
}

.str span + span {
    border-left: 1px solid #777;
}

.mode {
    padding: 0 3px;
    border-right: 1px solid #bbb;
}

.model {
    display: flex;
    align-items: center;
    gap: 2px;
    padding-left: 3px;
}

.model svg {
    width: 7px;
    height: 7px;
}

/* share dialog */
.dialog {
    position: absolute;
    top: 121px;
    left: 309px;
    width: 342px;
    padding: 0 6px 6px 7px;
    border: 1px solid #888;
    background: #fff;
    box-shadow: 0 2px 6px rgba(60, 40, 80, 0.5);
}

.dialog-head {
    display: flex;
    align-items: center;
    gap: 3px;
    height: 17px;
    margin-left: -3px;
}

.dialog-head h2 {
    flex: 1;
    font-family: "Open Sans", sans-serif;
    font-size: 8px;
}

.dialog-head svg {
    width: 9px;
    height: 8px;
}

.dialog-head button svg {
    width: 8px;
    fill: none;
    stroke: #555;
}

.dialog-body {
    display: flex;
    padding-top: 7px;
}

.side-tabs {
    width: 69px;
}

.side-tabs button {
    display: flex;
    align-items: center;
    justify-content: center;
    gap: 2px;
    width: 69px;
    height: 15px;
    border: 1px solid #bbb;
    border-right: 0;
    border-radius: 4px 0 0 0;
    white-space: nowrap;
}

.side-tabs .active {
    background: #dcdcfc;
}

.side-tabs svg {
    width: 10px;
    height: 9px;
}

.pane {
    flex: 1;
    display: flex;
    flex-direction: column;
    align-items: flex-start;
    min-height: 244px;
    padding: 7px 15px 0 6px;
    border: 1px solid #aaa7bc;
    line-height: 8px;
    color: #222;
}

.pane h3 {
    margin-bottom: 4px;
    font-family: "Open Sans", sans-serif;
    font-size: 7px;
    font-weight: bold;
}

.pane p {
    margin-bottom: 9px;
    white-space: nowrap;
}

.pane label {
    margin-bottom: 3px;
    font-weight: bold;
}

.pane input {
    width: 100%;
    height: 11px;
    padding: 0 1px;
    border: 1px solid #a9a9a9;
}

.pane strong {
    margin: 6px 0 9px;
}

.folder-row {
    display: flex;
    align-items: center;
    gap: 4px;
    width: 100%;
}

.folder-row input {
    flex: 1;
    color: #aaa;
}

.folder-row svg {
    width: 12px;
    height: 12px;
}

.dialog-foot {
    display: flex;
    justify-content: flex-end;
    gap: 17px;
    padding: 6px 11px 0 0;
}

.dialog-foot button {
    width: 45px;
    height: 13px;
    border: 1px solid #999;
}

.pointer {
    position: absolute;
    top: 265px;
    left: 586px;
    width: 14px;
    height: 21px;
}
```
